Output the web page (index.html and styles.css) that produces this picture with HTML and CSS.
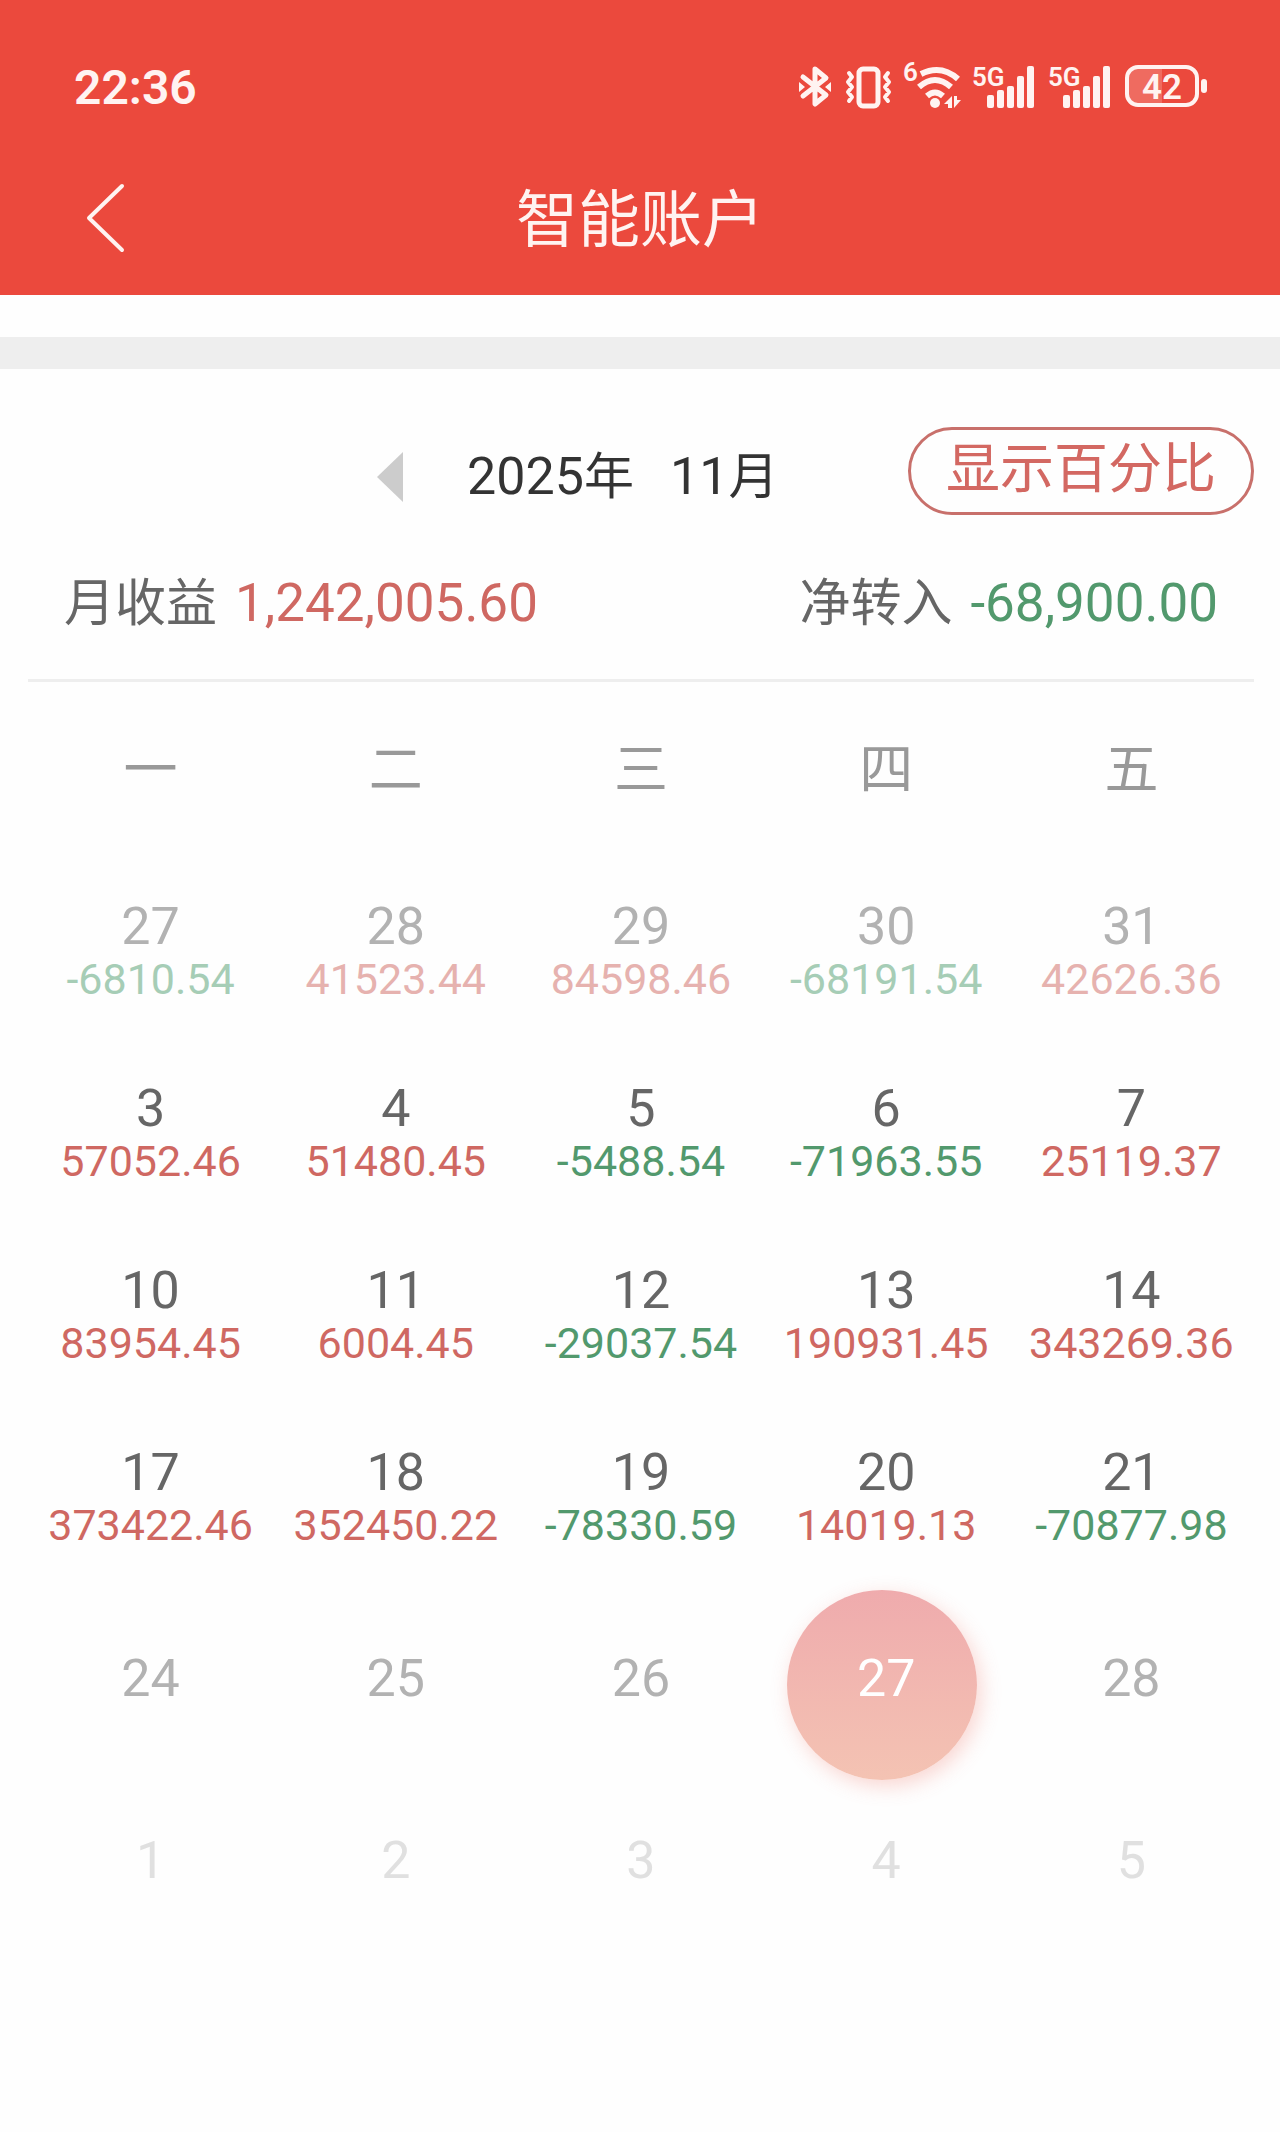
FILE: index.html
```html
<!DOCTYPE html>
<html lang="zh-CN">
<head>
    <meta charset="UTF-8">
    <meta name="viewport" content="width=device-width, initial-scale=1.0">
    <title>智能账户</title>
    <link rel="stylesheet" href="styles.css">
</head>
<body>
    <header class="header">
        <div class="status-bar">
            <span class="clock">22:36</span>
            <div class="status-icons">
                <svg width="34" height="46" viewBox="0 0 34 46" fill="none" stroke="currentColor" stroke-width="5" stroke-linejoin="round" stroke-linecap="round">
                    <path d="M5 13L28 31L17 40V5L28 14L5 32"/>
                    <path d="M27 23L33 18V28ZM7 23L1 18V28Z" fill="currentColor" stroke="none"/>
                </svg>
                <svg width="48" height="46" viewBox="0 0 48 46" fill="none" stroke="currentColor" stroke-width="4" stroke-linejoin="round" stroke-linecap="round">
                    <rect x="15" y="5" width="19" height="37" rx="4" stroke-width="5"/>
                    <path d="M5 9L8 13L4 18L8 23L4 28L8 33L5 37M44 9L41 13L45 18L41 23L45 28L41 33L44 37"/>
                </svg>
                <svg width="56" height="66" viewBox="0 -8 56 66" fill="none" stroke="currentColor" stroke-width="6">
                    <text class="net-label" x="-1" y="19">6</text>
                    <path d="M17 12Q37 2 54 17M15 25Q31 11 47 25M23 34Q31 27 39 34"/>
                    <circle cx="31" cy="41" r="5" fill="currentColor" stroke="none"/>
                    <path d="M48 34V46H44V42H40ZM50 46V34H53V38H57Z" fill="currentColor" stroke="none"/>
                </svg>
                <svg width="64" height="46" viewBox="0 0 64 46" fill="currentColor">
                    <text class="net-label" x="0" y="22">5G</text>
                    <rect x="15" y="31" width="7" height="13" rx="2"/>
                    <rect x="25" y="26" width="7" height="18" rx="2"/>
                    <rect x="35" y="22" width="7" height="22" rx="2"/>
                    <rect x="45" y="12" width="7" height="32" rx="2"/>
                    <rect x="55" y="2" width="7" height="42" rx="2"/>
                </svg>
                <svg width="64" height="46" viewBox="0 0 64 46" fill="currentColor">
                    <text class="net-label" x="0" y="22">5G</text>
                    <rect x="15" y="31" width="7" height="13" rx="2"/>
                    <rect x="25" y="26" width="7" height="18" rx="2"/>
                    <rect x="35" y="22" width="7" height="22" rx="2"/>
                    <rect x="45" y="12" width="7" height="32" rx="2"/>
                    <rect x="55" y="2" width="7" height="42" rx="2"/>
                </svg>
                <svg width="84" height="46" viewBox="0 0 84 46" fill="currentColor">
                    <path d="M13 4H38V41H13Q3 41 3 31V14Q3 4 13 4Z" opacity=".2"/>
                    <rect x="3" y="3" width="70" height="38" rx="11" fill="none" stroke="currentColor" stroke-width="4"/>
                    <rect x="77" y="15" width="6" height="14" rx="3"/>
                    <text class="battery-label" x="38" y="35" text-anchor="middle">42</text>
                </svg>
            </div>
        </div>
        <nav class="nav">
            <button class="back" type="button" aria-label="返回">
                <svg width="42" height="72" viewBox="0 0 42 72" fill="none" stroke="currentColor" stroke-width="4" stroke-linecap="round" stroke-linejoin="round">
                    <path d="M38 4L5 36L38 68"/>
                </svg>
            </button>
            <h1 class="title">智能账户</h1>
        </nav>
    </header>

    <main class="content">
        <div class="month-row">
            <button class="prev" type="button" aria-label="上个月">
                <svg width="26" height="50" viewBox="0 0 26 50" fill="#ccc"><path d="M26 0V50L0 25Z"/></svg>
            </button>
            <h2 class="month"><span><b>2025</b>年</span><span><b>11</b>月</span></h2>
            <button class="percent" type="button">显示百分比</button>
        </div>

        <div class="summary">
            <p class="summary-item">月收益 <span class="up">1,242,005.60</span></p>
            <p class="summary-item">净转入 <span class="down">-68,900.00</span></p>
        </div>

        <table class="calendar">
            <thead>
                <tr><th>一</th><th>二</th><th>三</th><th>四</th><th>五</th></tr>
            </thead>
            <tbody>
                <tr class="faded">
                    <td>27<span class="amount down">-6810.54</span></td>
                    <td>28<span class="amount up">41523.44</span></td>
                    <td>29<span class="amount up">84598.46</span></td>
                    <td>30<span class="amount down">-68191.54</span></td>
                    <td>31<span class="amount up">42626.36</span></td>
                </tr>
                <tr>
                    <td>3<span class="amount up">57052.46</span></td>
                    <td>4<span class="amount up">51480.45</span></td>
                    <td>5<span class="amount down">-5488.54</span></td>
                    <td>6<span class="amount down">-71963.55</span></td>
                    <td>7<span class="amount up">25119.37</span></td>
                </tr>
                <tr>
                    <td>10<span class="amount up">83954.45</span></td>
                    <td>11<span class="amount up">6004.45</span></td>
                    <td>12<span class="amount down">-29037.54</span></td>
                    <td>13<span class="amount up">190931.45</span></td>
                    <td>14<span class="amount up">343269.36</span></td>
                </tr>
                <tr>
                    <td>17<span class="amount up">373422.46</span></td>
                    <td>18<span class="amount up">352450.22</span></td>
                    <td>19<span class="amount down">-78330.59</span></td>
                    <td>20<span class="amount up">14019.13</span></td>
                    <td>21<span class="amount down">-70877.98</span></td>
                </tr>
                <tr class="faded">
                    <td>24</td>
                    <td>25</td>
                    <td>26</td>
                    <td class="today">27</td>
                    <td>28</td>
                </tr>
                <tr class="next-month">
                    <td>1</td>
                    <td>2</td>
                    <td>3</td>
                    <td>4</td>
                    <td>5</td>
                </tr>
            </tbody>
        </table>
    </main>
</body>
</html>
```

FILE: styles.css
```css
* {
    box-sizing: border-box;
}
body {
    margin: 0;
    background-color: #fefefe;
    color: #666;
    font-family: Roboto, "Noto Sans CJK SC", sans-serif;
}
h1, h2, p {
    margin: 0;
    font-weight: 400;
}
button {
    padding: 0;
    border: none;
    background: none;
    color: inherit;
    font-family: inherit;
    cursor: pointer;
}
svg {
    display: block;
    overflow: visible;
}

/* header */
.header {
    background-color: #eb493d;
    color: #fff3f1;
}
.status-bar {
    display: flex;
    justify-content: space-between;
    align-items: center;
    height: 128px;
    padding: 46px 72px 0 74px;
}
.clock {
    font-size: 48px;
    font-weight: 600;
}
.status-icons {
    display: flex;
    align-items: center;
    gap: 12px;
}
.net-label {
    fill: currentColor;
    stroke: none;
    font-size: 26px;
    font-weight: 600;
}
.battery-label {
    font-size: 35px;
    font-weight: 600;
}
.nav {
    display: grid;
    grid-template-columns: 1fr auto 1fr;
    align-items: center;
    height: 167px;
    padding: 13px 84px 0;
}
.back {
    justify-self: start;
}
.title {
    padding-top: 6px;
    font-size: 62px;
    line-height: 80px;
}

/* month */
.content {
    margin-top: 42px;
    padding: 58px 26px 0 28px;
    border-top: 32px solid #eee;
}
.month-row {
    display: grid;
    grid-template-columns: 12fr auto 13fr;
    align-items: center;
    height: 100px;
}
.prev {
    justify-self: end;
    margin-right: 64px;
}
.month {
    display: flex;
    gap: 36px;
    color: #333;
    font-size: 50px;
    line-height: 60px;
}
.month b {
    font-size: 52px;
    font-weight: 400;
}
.percent {
    justify-self: end;
    align-self: start;
    height: 88px;
    padding: 0 35px 2px;
    border: 3px solid #c8706b;
    border-radius: 44px;
    color: #d36862;
    font-size: 54px;
    line-height: 76px;
}
.summary {
    display: flex;
    justify-content: space-between;
    align-items: center;
    height: 155px;
    padding: 0 36px;
    border-bottom: 3px solid #eee;
}
.summary-item {
    display: flex;
    align-items: baseline;
    gap: 18px;
    font-size: 51px;
    line-height: 60px;
}
.summary-item span {
    font-size: 53px;
}
.up {
    color: #cf6862;
}
.down {
    color: #52996d;
}

/* calendar */
.calendar {
    width: 100%;
    table-layout: fixed;
    border-collapse: collapse;
    text-align: center;
    font-size: 52px;
    line-height: 56px;
}
.calendar th {
    height: 178px;
    padding: 0;
    color: #999;
    font-size: 54px;
    font-weight: 400;
}
.calendar td {
    position: relative;
    height: 182px;
    padding: 0;
}
.amount {
    display: block;
    font-size: 43px;
    line-height: 48px;
}
.faded td {
    color: #b2b2b2;
}
.faded .up {
    color: #e6b2af;
}
.faded .down {
    color: #a6cdb6;
}
.next-month td {
    color: #e0e0e0;
}
.calendar .today {
    z-index: 0;
    color: #fff;
}
.today::before {
    content: "";
    position: absolute;
    z-index: -1;
    top: 2px;
    left: calc(50% - 99px);
    width: 190px;
    height: 190px;
    border-radius: 50%;
    background: linear-gradient(#efabad, #f4c3b3);
    box-shadow: 4px 6px 20px rgba(240, 120, 105, 0.3);
}
```
